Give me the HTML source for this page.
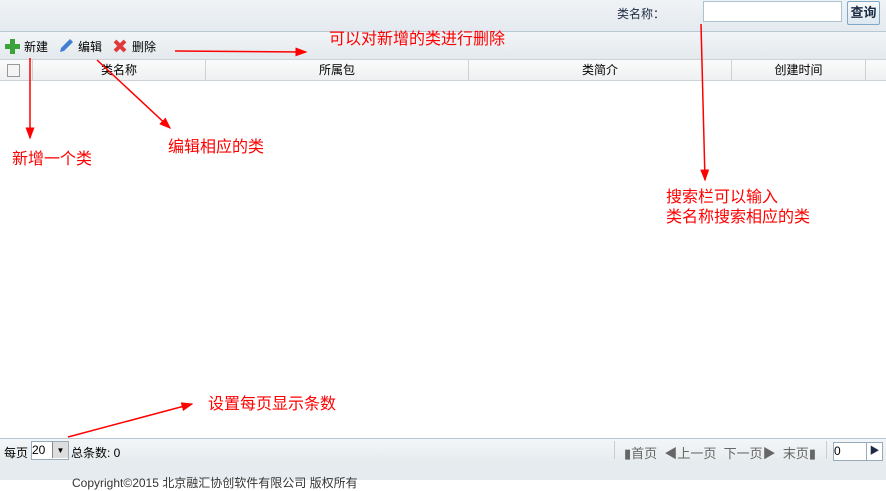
<!DOCTYPE html>
<html><head><meta charset="utf-8"><style>
body{margin:0;width:886px;height:480px;overflow:hidden;position:relative;font-family:"Liberation Sans","Noto Sans CJK SC",sans-serif;font-size:12px;background:#fff}
.a{position:absolute}
.red{color:#f00;font-size:16px;position:absolute;white-space:nowrap;line-height:18px}
.hd{position:absolute;top:59px;height:22px;line-height:22px;text-align:center;border-right:1px solid #ccd3d8;box-sizing:border-box;color:#000}
</style></head><body>
<div class="a" style="left:0;top:0;width:886px;height:31px;background:linear-gradient(#f0f3f6,#e4eaef);border-bottom:1px solid #b8c9d3"></div>
<div class="a" style="left:617px;top:5px;color:#1d2c45">类名称：</div>
<div class="a" style="left:703px;top:1px;width:137px;height:19px;border:1px solid #a9c3d1;background:#fff"></div>
<div class="a" style="left:847px;top:1px;width:31px;height:22px;border:1px solid #7fa9c7;border-radius:2px;background:linear-gradient(#f8fbfd,#dce7f0);font-weight:bold;color:#1d2c45;line-height:22px;text-align:center;font-size:13px">查询</div>
<div class="a" style="left:0;top:32px;width:886px;height:27px;background:linear-gradient(#f2f5f7,#e3e9ed)"></div>
<svg class="a" style="left:4px;top:38px" width="17" height="17"><path d="M6 1h5v5h5v5h-5v5h-5v-5h-5v-5h5z" fill="#3ca33a"/></svg>
<div class="a" style="left:24px;top:38px">新建</div>
<svg class="a" style="left:58px;top:37px" width="17" height="17"><path d="M2 15l1-4 9-9 3 3-9 9z" fill="#3f7fd6"/></svg>
<div class="a" style="left:78px;top:38px">编辑</div>
<svg class="a" style="left:112px;top:38px" width="16" height="16"><path d="M3 3l10 10M13 3l-10 10" stroke="#e0393b" stroke-width="4"/></svg>
<div class="a" style="left:132px;top:38px">删除</div>
<div class="a" style="left:0;top:59px;width:886px;height:22px;background:linear-gradient(#fbfbfb,#eef0f1);border-top:1px solid #ccd3d8;border-bottom:1px solid #ccd3d8;box-sizing:border-box"></div>
<div class="hd" style="left:0;width:33px"><div style="margin:5px 0 0 7px;width:11px;height:11px;border:1px solid #999;background:#f4f4f4"></div></div>
<div class="hd" style="left:33px;width:173px">类名称</div>
<div class="hd" style="left:206px;width:263px">所属包</div>
<div class="hd" style="left:469px;width:263px">类简介</div>
<div class="hd" style="left:732px;width:134px">创建时间</div>
<div class="a" style="left:0;top:438px;width:886px;height:24px;background:linear-gradient(#f3f6f8,#e5ebee);border-top:1px solid #b8c9d3;border-bottom:1px solid #b8c9d3"></div>
<div class="a" style="left:4px;top:444px">每页</div>
<div class="a" style="left:31px;top:441px;width:36px;height:17px;border:1px solid #9ab;background:#fff;font-size:12px;line-height:17px">20<span style="position:absolute;right:0;top:0;width:15px;height:16px;background:#ddd;border-left:1px solid #888;text-align:center;font-size:8px">▼</span></div>
<div class="a" style="left:71px;top:444px">总条数: 0</div>
<div class="a" style="left:614px;top:441px;width:1px;height:18px;background:#ccc"></div>
<div class="a" style="left:624px;top:443px;color:#666;font-size:13px">▮首页 &nbsp;◀上一页 &nbsp;下一页▶ &nbsp;末页▮</div>
<div class="a" style="left:826px;top:441px;width:1px;height:18px;background:#ccc"></div>
<div class="a" style="left:833px;top:442px;width:48px;height:17px;border:1px solid #9ab;background:#fff;line-height:17px">0<span style="position:absolute;right:0;top:0;width:15px;height:17px;border-left:1px solid #9ab;color:#1d2c45;text-align:center;font-size:10px">▶</span></div>
<div class="a" style="left:0;top:463px;width:886px;height:17px;background:#e5ebee"></div>
<div class="a" style="left:72px;top:474px;color:#333">Copyright©2015 北京融汇协创软件有限公司 版权所有</div>
<svg class="a" style="left:0;top:0" width="886" height="480">
<defs><marker id="m" markerWidth="8" markerHeight="6" refX="7" refY="3" orient="auto"><path d="M0 0L8 3L0 6z" fill="#f00"/></marker></defs>
<g stroke="#f00" stroke-width="1.5" fill="none" marker-end="url(#m)">
<line x1="175" y1="51" x2="306" y2="52"/>
<line x1="30" y1="58" x2="30" y2="138"/>
<line x1="97" y1="60" x2="170" y2="128"/>
<line x1="701" y1="24" x2="705" y2="180"/>
<line x1="68" y1="437" x2="192" y2="404"/>
</g></svg>
<div class="red" style="left:329px;top:31px">可以对新增的类进行删除</div>
<div class="red" style="left:12px;top:151px">新增一个类</div>
<div class="red" style="left:168px;top:139px">编辑相应的类</div>
<div class="red" style="left:666px;top:189px">搜索栏可以输入</div>
<div class="red" style="left:666px;top:209px">类名称搜索相应的类</div>
<div class="red" style="left:208px;top:396px">设置每页显示条数</div>
</body></html>
